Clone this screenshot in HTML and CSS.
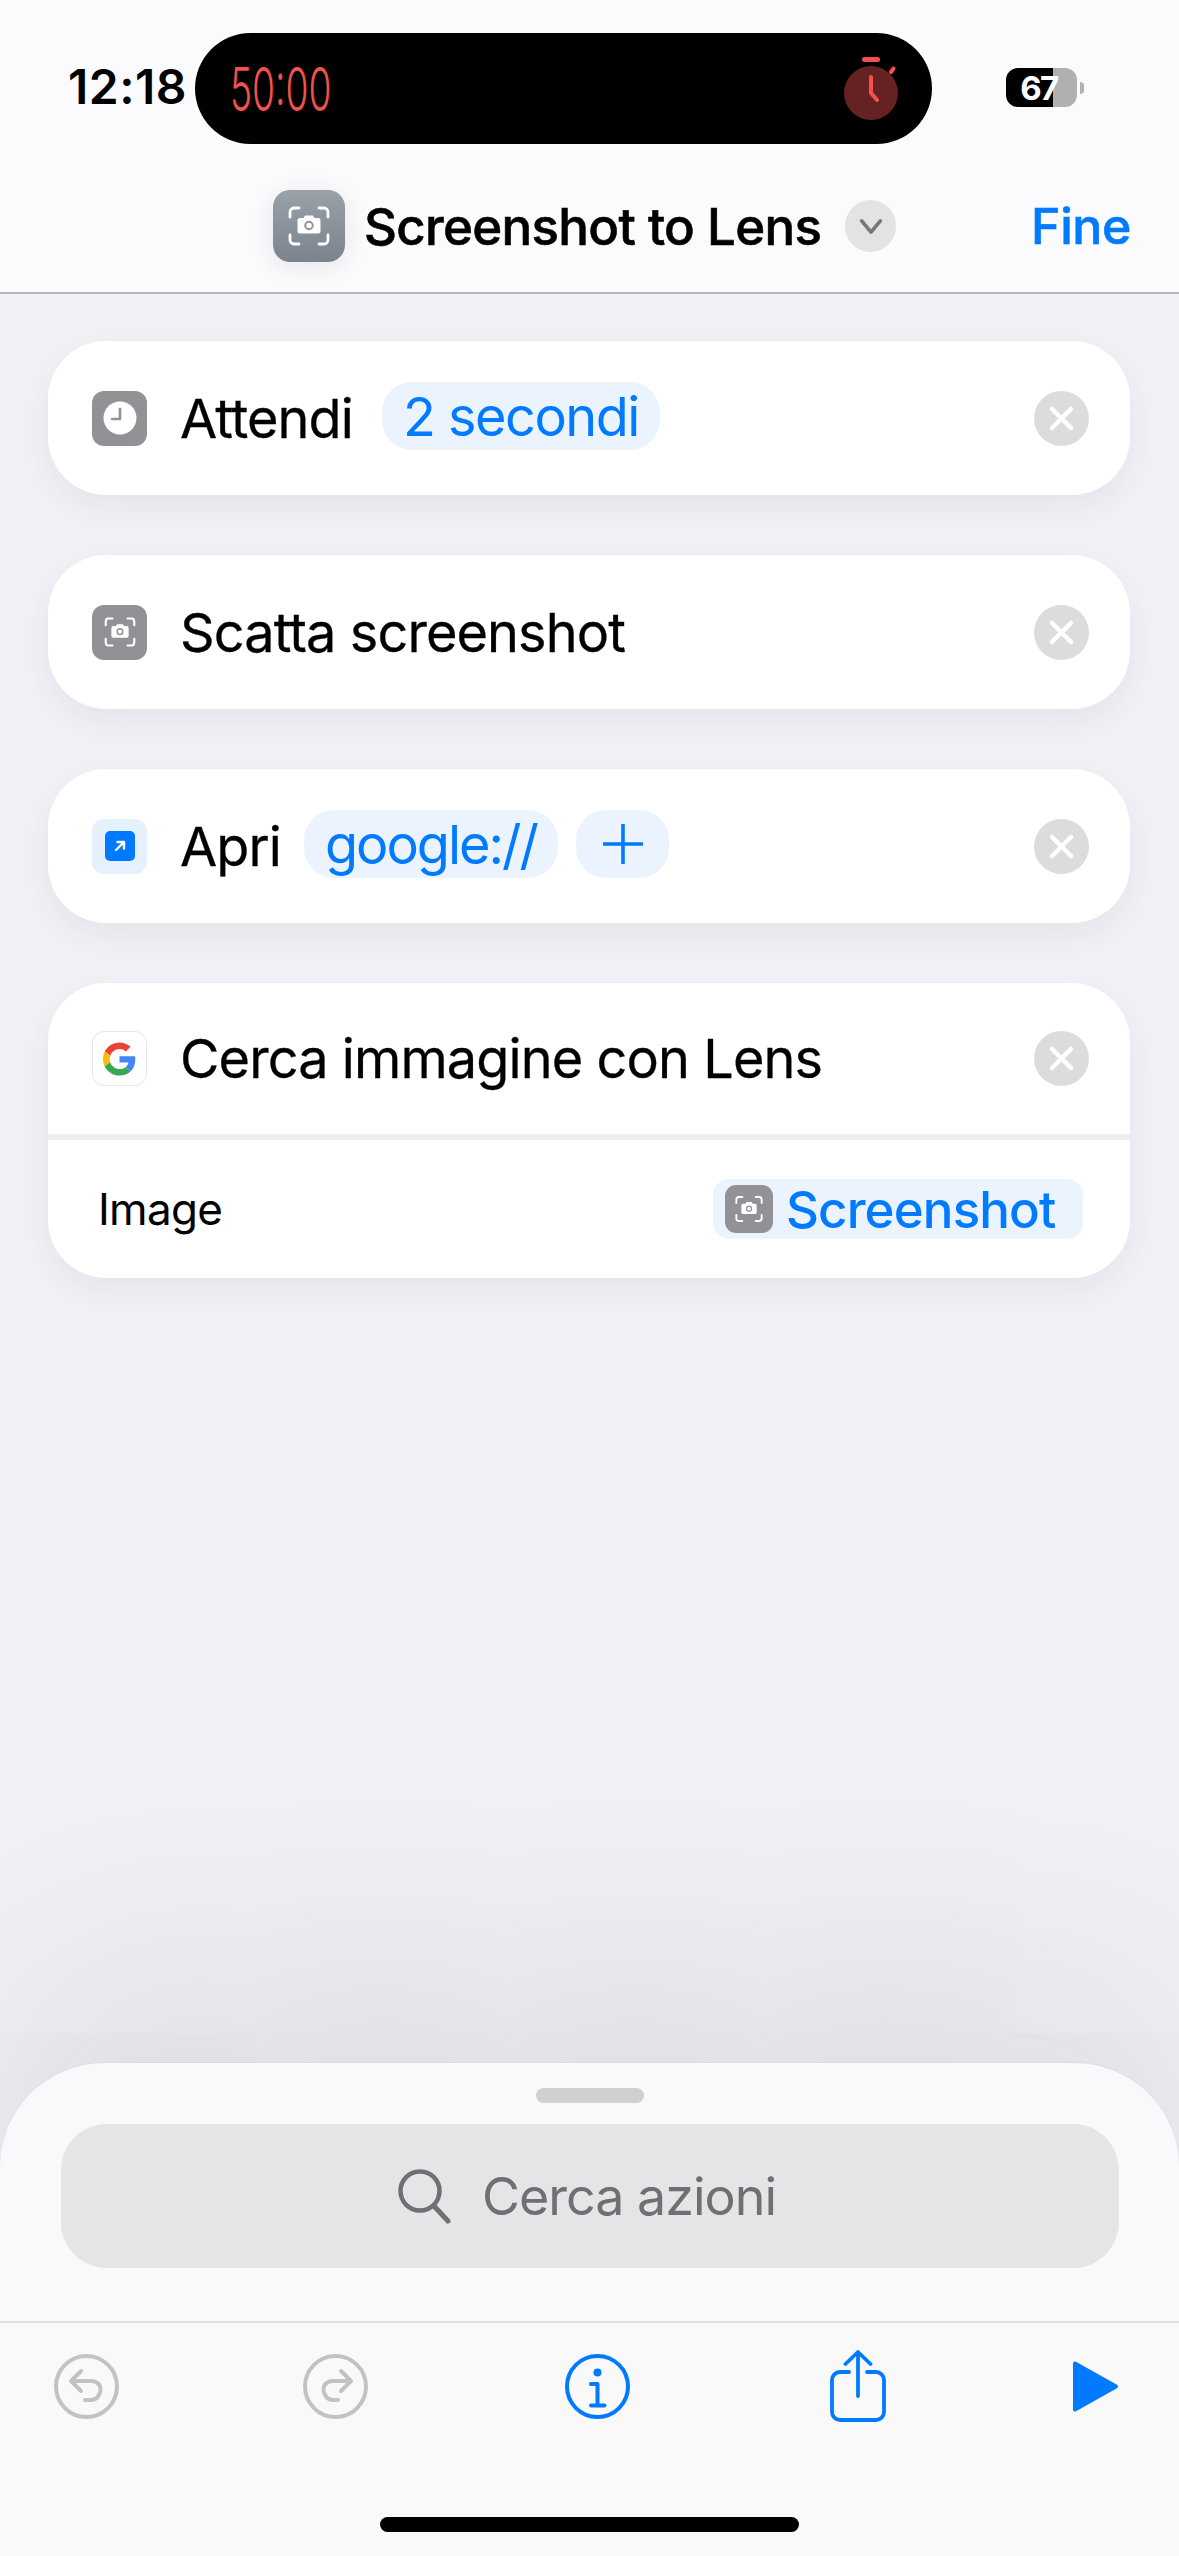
FILE: index.html
```html
<!DOCTYPE html>
<html lang="it">
<head>
<meta charset="utf-8">
<title>Screenshot to Lens</title>
<link rel="stylesheet" href="styles.css">
</head>
<body>
<svg class="defs" aria-hidden="true">
  <symbol id="shot" viewBox="0 0 48 48">
    <g fill="none" stroke="currentColor" stroke-width="2.8" stroke-linecap="round">
      <path d="M5 15V10a4 4 0 0 1 4-4h5M34 6h5a4 4 0 0 1 4 4v5M43 33v5a4 4 0 0 1-4 4h-5M14 42H9a4 4 0 0 1-4-4v-5"/>
    </g>
    <path fill="currentColor" fill-rule="evenodd" d="M15 16h3.500l1.600-2.500h7.800l1.600 2.500H33a2.500 2.500 0 0 1 2.500 2.500v10.500A2.500 2.500 0 0 1 33 31.500H15a2.500 2.500 0 0 1-2.500-2.500V18.500A2.500 2.500 0 0 1 15 16zm9 2.800a4.700 4.700 0 1 0 0 9.400 4.700 4.700 0 0 0 0-9.400zm0 1.900a2.800 2.800 0 1 1 0 5.600 2.800 2.800 0 0 1 0-5.600z"/>
  </symbol>
  <symbol id="x" viewBox="0 0 55 55">
    <path d="M18 18l19 19M37 18L18 37" fill="none" stroke="#fff" stroke-width="4.500" stroke-linecap="round"/>
  </symbol>
</svg>

<header class="top">
  <div class="status">
    <span class="time">12:18</span>
    <div class="island">
      <span class="timer"><span class="timer-text">50:00</span></span>
      <svg class="timer-icon" viewBox="0 0 60 67">
        <rect x="22" y="2" width="18" height="5" rx="2.500" fill="#f4514d"/>
        <path d="M51 17l2.500-3.500" stroke="#f4514d" stroke-width="4" stroke-linecap="round"/>
        <circle cx="31" cy="38" r="27" fill="#662222"/>
        <path d="M31 22v16l6 7" fill="none" stroke="#f4514d" stroke-width="4" stroke-linecap="round" stroke-linejoin="round"/>
      </svg>
    </div>
    <div class="battery"><span class="battery-level">67</span></div>
    <span class="battery-nub"></span>
  </div>
  <div class="nav">
    <div class="app-icon"><svg class="app-glyph"><use href="#shot"/></svg></div>
    <span class="title">Screenshot to Lens</span>
    <span class="chev">
      <svg class="chev-glyph" viewBox="0 0 30 20"><path d="M5 4l10 12L25 4" fill="none" stroke="#77777b" stroke-width="4" stroke-linecap="round" stroke-linejoin="round"/></svg>
    </span>
    <span class="done">Fine</span>
  </div>
</header>

<main class="list">
  <section class="card">
    <div class="row">
      <span class="ico ico-gray">
        <svg class="ico-clock" viewBox="0 0 34 34"><circle cx="17" cy="17" r="16.500" fill="#fff"/><path d="M17 8v10h-8" fill="none" stroke="#929296" stroke-width="2.600" stroke-linecap="round" stroke-linejoin="round"/></svg>
      </span>
      <span class="label">Attendi</span>
      <span class="pill pill-wait">2 secondi</span>
      <svg class="close"><use href="#x"/></svg>
    </div>
  </section>

  <section class="card">
    <div class="row">
      <span class="ico ico-gray"><svg class="ico-shot"><use href="#shot"/></svg></span>
      <span class="label">Scatta screenshot</span>
      <svg class="close"><use href="#x"/></svg>
    </div>
  </section>

  <section class="card">
    <div class="row">
      <span class="ico ico-blue">
        <span class="ico-open">
          <svg class="ico-arrow" viewBox="0 0 18 18"><path d="M5 13l8-8M6.500 5H13v6.500" fill="none" stroke="#fff" stroke-width="2.400" stroke-linecap="round" stroke-linejoin="round"/></svg>
        </span>
      </span>
      <span class="label">Apri</span>
      <span class="pill pill-url">google://</span>
      <span class="pill pill-plus">
        <svg class="plus" viewBox="0 0 40 40"><path d="M20 1v38M1 20h38" fill="none" stroke="#007aff" stroke-width="3.600" stroke-linecap="round"/></svg>
      </span>
      <svg class="close"><use href="#x"/></svg>
    </div>
  </section>

  <section class="card">
    <div class="row row-head">
      <span class="ico ico-google">
        <svg class="g-logo" viewBox="0 0 48 48">
          <path fill="#EA4335" d="M24 9.500c3.540 0 6.710 1.220 9.210 3.600l6.850-6.850C35.900 2.380 30.470 0 24 0 14.620 0 6.510 5.380 2.560 13.220l7.980 6.190C12.430 13.720 17.740 9.500 24 9.500z"/>
          <path fill="#4285F4" d="M46.980 24.550c0-1.570-.15-3.090-.38-4.550H24v9.020h12.940c-.58 2.960-2.260 5.480-4.780 7.180l7.730 6c4.510-4.180 7.090-10.360 7.090-17.650z"/>
          <path fill="#FBBC05" d="M10.530 28.590c-.48-1.450-.76-2.990-.76-4.590s.27-3.140.76-4.590l-7.980-6.190C.92 16.460 0 20.120 0 24c0 3.880.92 7.540 2.560 10.780l7.970-6.190z"/>
          <path fill="#34A853" d="M24 48c6.480 0 11.930-2.130 15.890-5.810l-7.730-6c-2.150 1.450-4.920 2.300-8.160 2.300-6.260 0-11.570-4.220-13.470-9.910l-7.980 6.190C6.510 42.620 14.620 48 24 48z"/>
        </svg>
      </span>
      <span class="label">Cerca immagine con Lens</span>
      <svg class="close"><use href="#x"/></svg>
    </div>
    <div class="row row-param">
      <span class="param">Image</span>
      <span class="var">
        <span class="var-ico"><svg class="var-glyph"><use href="#shot"/></svg></span>
        <span class="var-text">Screenshot</span>
      </span>
    </div>
  </section>
</main>

<section class="sheet">
  <span class="handle"></span>
  <div class="search">
    <svg class="search-ico" viewBox="0 0 53 55"><circle cx="22" cy="22" r="19.500" fill="none" stroke="#6f6f74" stroke-width="4.500"/><path d="M36 37l14 15" fill="none" stroke="#6f6f74" stroke-width="5" stroke-linecap="round"/></svg>
    <span class="search-text">Cerca azioni</span>
  </div>
</section>

<footer class="toolbar">
  <div class="tools">
    <svg class="tool" viewBox="0 0 65 65"><g fill="none" stroke="#c2c2c2" stroke-width="4" stroke-linecap="round" stroke-linejoin="round"><circle cx="32.500" cy="32.500" r="30.500"/><path d="M27 17L17 27l10 10M18 27h19c6 0 9.500 4 9.500 8.500S43 46 37 46h-6"/></g></svg>
    <svg class="tool" viewBox="0 0 65 65"><g fill="none" stroke="#c2c2c2" stroke-width="4" stroke-linecap="round" stroke-linejoin="round"><circle cx="32.500" cy="32.500" r="30.500"/><path d="M38 17l10 10-10 10M47 27H30c-6 0-9.500 4-9.500 8.500S24 46 30 46h5"/></g></svg>
    <svg class="tool" viewBox="0 0 65 65"><g fill="none" stroke="#007aff" stroke-width="4" stroke-linecap="round" stroke-linejoin="round"><circle cx="32.500" cy="32.500" r="30.500"/><path d="M26 30h6.500v21M26 51.500h13.500"/></g><circle cx="32.500" cy="18.500" r="4" fill="#007aff"/></svg>
    <svg class="tool-share" viewBox="0 0 56 72"><g fill="none" stroke="#007aff" stroke-width="3.800" stroke-linecap="round" stroke-linejoin="round"><path d="M19 22h-9a8 8 0 0 0-8 8v32a8 8 0 0 0 8 8h36a8 8 0 0 0 8-8V30a8 8 0 0 0-8-8h-9"/><path d="M28 3v43M15.500 14L28 2l12.500 12"/></g></svg>
    <svg class="tool-play" viewBox="0 0 47 53"><path d="M3 3.500v46L44 26.500z" fill="#007aff" stroke="#007aff" stroke-width="4" stroke-linejoin="round"/></svg>
  </div>
  <span class="home"></span>
</footer>
</body>
</html>
```

FILE: styles.css
```css
* { box-sizing: border-box; }

html, body { margin: 0; padding: 0; }

body {
  width: 1179px;
  height: 2556px;
  overflow: hidden;
  display: flex;
  flex-direction: column;
  background: #f1f1f6;
  font-family: Inter, "Noto Sans", sans-serif;
  color: #000;
}

.defs { display: none; }

/* header */
.top {
  height: 294px;
  padding-top: 33px;
  background: #fbfbfd;
  border-bottom: 2px solid #b5b5b8;
}

.status {
  display: flex;
  align-items: center;
  height: 111px;
  padding-left: 68px;
}

.time {
  width: 127px;
  font-size: 48px;
  font-weight: 600;
  letter-spacing: .5px;
  padding-bottom: 4px;
}

.island {
  width: 737px;
  height: 111px;
  border-radius: 56px;
  background: #000;
  display: flex;
  align-items: center;
  justify-content: space-between;
  padding: 0 32px 0 35px;
}

.timer { width: 100px; white-space: nowrap; }

.timer-text {
  display: inline-block;
  font-size: 60px;
  font-weight: 300;
  color: #f4514d;
  transform: scaleX(.62);
  transform-origin: left center;
}

.timer-icon { width: 60px; height: 67px; }

.battery {
  width: 71px;
  height: 39px;
  margin-left: 74px;
  margin-bottom: 2px;
  border-radius: 12px;
  background: linear-gradient(90deg, #000 66%, #b0b0b0 66%);
  display: flex;
  align-items: center;
  justify-content: center;
  padding-right: 5px;
}

.battery-level {
  color: #fff;
  font-size: 33px;
  font-weight: 700;
  letter-spacing: -1.500px;
}

.battery-nub {
  width: 4px;
  height: 12px;
  margin: 0 0 2px 3px;
  border-radius: 0 6px 6px 0;
  background: #b0b0b0;
}

.nav {
  display: flex;
  align-items: center;
  height: 72px;
  margin-top: 46px;
  padding: 0 48px 0 273px;
}

.app-icon {
  width: 72px;
  height: 72px;
  border-radius: 17px;
  background: linear-gradient(180deg, #99a1a9, #7b838e);
  box-shadow: 0 4px 26px rgba(0, 0, 0, .09);
  display: flex;
  align-items: center;
  justify-content: center;
  color: #fff;
}

.app-glyph { width: 48px; height: 48px; }

.title {
  width: 456px;
  margin-left: 19px;
  font-size: 51px;
  font-weight: 500;
  letter-spacing: -.7px;
  -webkit-text-stroke: .6px #000;
  white-space: nowrap;
}

.chev {
  width: 51px;
  height: 52px;
  margin-left: 25px;
  border-radius: 50%;
  background: #e3e3e6;
  display: flex;
  align-items: center;
  justify-content: center;
}

.chev-glyph { width: 28px; height: 19px; }

.done {
  margin-left: auto;
  font-size: 50px;
  font-weight: 500;
  color: #007aff;
  letter-spacing: -.4px;
  -webkit-text-stroke: .6px #007aff;
}

/* action cards */
.list {
  display: flex;
  flex-direction: column;
  gap: 60px;
  padding: 47px 49px 0 48px;
}

.card {
  background: #fff;
  border-radius: 58px;
  box-shadow: 0 12px 34px rgba(60, 60, 80, .07);
}

.row {
  display: flex;
  align-items: center;
  height: 154px;
  padding: 0 41px 0 44px;
}

.row-head { height: 151px; }

.row-param {
  height: 144px;
  padding: 0 47px 0 50px;
  border-top: 6px solid #efeff0;
  justify-content: space-between;
}

.ico {
  width: 55px;
  height: 55px;
  flex: none;
  border-radius: 12px;
  display: flex;
  align-items: center;
  justify-content: center;
}

.ico-gray { background: #929296; color: #fff; }
.ico-blue { background: #e5f1fe; }
.ico-google { background: #fff; border: 1px solid #e4e4e6; }

.ico-clock { width: 34px; height: 34px; }
.ico-shot { width: 36px; height: 36px; }

.ico-open {
  width: 30px;
  height: 30px;
  border-radius: 5px;
  background: #007aff;
  display: flex;
  align-items: center;
  justify-content: center;
}

.ico-arrow { width: 18px; height: 18px; }
.g-logo { width: 33px; height: 34px; }

.label {
  margin-left: 33px;
  font-size: 54px;
  font-weight: 400;
  letter-spacing: -.9px;
  -webkit-text-stroke: .3px #000;
  white-space: nowrap;
}

.pill {
  height: 68px;
  border-radius: 30px;
  background: #ebf4fe;
  color: #007aff;
  font-size: 54px;
  letter-spacing: -1.500px;
  display: flex;
  align-items: center;
  padding: 0 21px;
  margin-bottom: 4px;
  white-space: nowrap;
}

.pill-wait { margin-left: 29px; }

.pill-url {
  margin-left: 23px;
  letter-spacing: -2px;
}

.pill-plus {
  width: 93px;
  margin-left: 18px;
  padding: 0;
  justify-content: center;
}

.plus { width: 40px; height: 40px; }

.close {
  width: 55px;
  height: 55px;
  margin-left: auto;
  flex: none;
  border-radius: 50%;
  background: #dcdcde;
}

.param {
  font-size: 44px;
  letter-spacing: -.7px;
}

.var {
  width: 370px;
  height: 60px;
  border-radius: 16px;
  background: #ebf4fe;
  display: flex;
  align-items: center;
  padding-left: 12px;
}

.var-ico {
  width: 48px;
  height: 48px;
  border-radius: 11px;
  background: #929296;
  color: #fff;
  display: flex;
  align-items: center;
  justify-content: center;
}

.var-glyph { width: 32px; height: 32px; }

.var-text {
  margin-left: 13px;
  font-size: 51px;
  font-weight: 500;
  letter-spacing: -.85px;
  color: #007aff;
}

/* bottom sheet */
.sheet {
  margin-top: auto;
  height: 258px;
  border-radius: 104px 104px 0 0;
  background: #f8f9fb;
  box-shadow: 0 -1px 0 rgba(0, 0, 0, .03), 0 -60px 300px rgba(50, 50, 70, .15);
  display: flex;
  flex-direction: column;
  align-items: center;
  padding-top: 25px;
}

.handle {
  width: 108px;
  height: 15px;
  border-radius: 8px;
  background: #d0d0d2;
}

.search {
  width: 1058px;
  height: 144px;
  margin-top: 21px;
  border-radius: 46px;
  background: #e4e5e7;
  display: flex;
  align-items: center;
  justify-content: center;
  gap: 31px;
  padding-right: 5px;
}

.search-ico { width: 53px; height: 55px; }

.search-text {
  font-size: 52px;
  letter-spacing: -1px;
  color: #6f6f74;
}

.toolbar {
  position: relative;
  height: 235px;
  background: #f9f9f9;
  border-top: 2px solid #dedee0;
  display: flex;
  flex-direction: column;
  align-items: center;
  padding-top: 27px;
}

.tools {
  width: 100%;
  height: 72px;
  padding-left: 54px;
  display: grid;
  grid-template-columns: 249px 262px 265px 242px 47px;
  align-items: center;
}

.tool { width: 65px; height: 65px; }
.tool-share { width: 56px; height: 72px; }
.tool-play { width: 47px; height: 53px; }

.home {
  width: 419px;
  height: 15px;
  margin-top: 95px;
  border-radius: 8px;
  background: #000;
}
```
